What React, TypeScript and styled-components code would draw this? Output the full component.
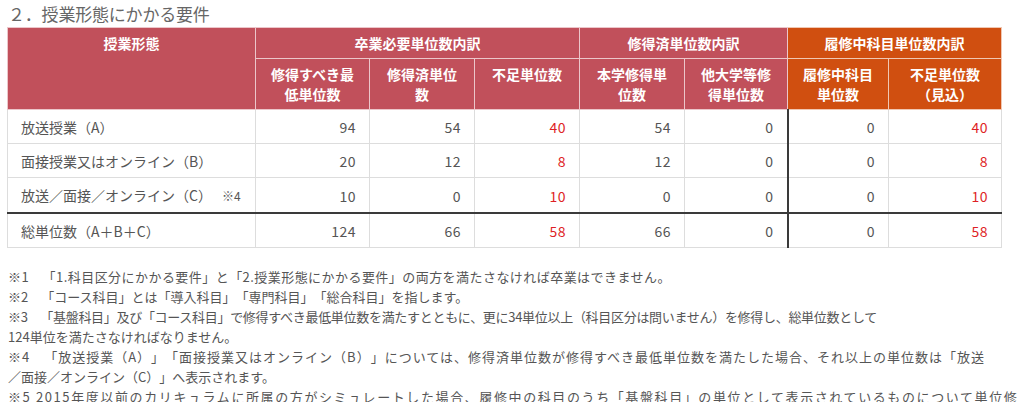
import React from 'react';
import styled, { createGlobalStyle, css } from 'styled-components';

const GlobalStyle = createGlobalStyle`
  html, body { margin: 0; padding: 0; background: #ffffff; overflow: hidden; }
  body {
    font-family: "Noto Sans CJK JP", "Noto Sans", sans-serif;
    color: #555555;
    text-spacing-trim: space-all;
  }
`;

const Page = styled.div`
  width: 1024px;
  box-sizing: border-box;
  padding: 0 0 0 7px;
  overflow: hidden;
`;

const Heading = styled.h2`
  margin: 0 0 1px 1px;
  padding-top: 2px;
  font-size: 17px;
  line-height: 24px;
  font-weight: normal;
  color: #666666;
  letter-spacing: -0.2px;
`;

const Table = styled.table`
  width: 994px;
  table-layout: fixed;
  border-collapse: collapse;
  font-size: 14px;
  line-height: 20px;
`;

type Tone = 'red' | 'orange';

const HeadCell = styled.th<{ $tone?: Tone }>`
  background: ${(p) => (p.$tone === 'orange' ? '#d04f10' : '#c1505b')};
  color: #ffffff;
  font-weight: bold;
  text-align: center;
  vertical-align: top;
  padding: 5px 8px;
  border: 1px solid ${(p) => (p.$tone === 'orange' ? '#f0c7b2' : '#ecc6ca')};
`;

const Row = styled.tr<{ $total?: boolean }>`
  ${(p) =>
    p.$total &&
    css`
      td {
        border-top: 2px solid #3a3a3a;
      }
    `}
`;

const LabelCell = styled.td`
  text-align: left;
  padding: 7px 12px 6px 13px;
  border: 1px solid #dddddd;
  color: #555555;
  white-space: nowrap;
`;

const NumCell = styled.td<{ $alert?: boolean; $divider?: boolean }>`
  text-align: right;
  padding: 7px 13px 6px 12px;
  border: 1px solid #dddddd;
  color: ${(p) => (p.$alert ? '#de1f26' : '#555555')};
  letter-spacing: 0.5px;
  ${(p) =>
    p.$divider &&
    css`
      border-left: 2px solid #3a3a3a;
    `}
`;

const Mark = styled.span`
  font-size: 12px;
  margin-left: 10px;
`;

const Notes = styled.div`
  margin-top: 19px;
  padding-left: 1px;
  font-size: 13px;
  line-height: 20px;
  color: #555555;
  white-space: nowrap;
`;

const Note = styled.p`
  margin: 0;
`;

const Line = styled.span<{ $tracking?: number }>`
  letter-spacing: ${(p) => p.$tracking ?? 0}px;
`;

const widths = [248, 114, 105, 105, 105, 103, 101, 113];

type RowData = {
  label: React.ReactNode;
  values: number[];
  total?: boolean;
};

const rows: RowData[] = [
  { label: '放送授業（A）', values: [94, 54, 40, 54, 0, 0, 40] },
  { label: '面接授業又はオンライン（B）', values: [20, 12, 8, 12, 0, 0, 8] },
  {
    label: (
      <>
        放送／面接／オンライン（C）<Mark>※4</Mark>
      </>
    ),
    values: [10, 0, 10, 0, 0, 0, 10],
  },
  { label: '総単位数（A＋B＋C）', values: [124, 66, 58, 66, 0, 0, 58], total: true },
];

const alertCols = new Set([2, 6]);

export default function App() {
  return (
    <>
      <GlobalStyle />
      <Page>
        <Heading>２．授業形態にかかる要件</Heading>
        <Table>
          <colgroup>
            {widths.map((w, i) => (
              <col key={i} style={{ width: w }} />
            ))}
          </colgroup>
          <thead>
            <tr>
              <HeadCell rowSpan={2}>授業形態</HeadCell>
              <HeadCell colSpan={3}>卒業必要単位数内訳</HeadCell>
              <HeadCell colSpan={2}>修得済単位数内訳</HeadCell>
              <HeadCell colSpan={2} $tone="orange">
                履修中科目単位数内訳
              </HeadCell>
            </tr>
            <tr>
              <HeadCell>
                修得すべき最
                <br />
                低単位数
              </HeadCell>
              <HeadCell>
                修得済単位
                <br />
                数
              </HeadCell>
              <HeadCell>不足単位数</HeadCell>
              <HeadCell>
                本学修得単
                <br />
                位数
              </HeadCell>
              <HeadCell>
                他大学等修
                <br />
                得単位数
              </HeadCell>
              <HeadCell $tone="orange">
                履修中科目
                <br />
                単位数
              </HeadCell>
              <HeadCell $tone="orange">
                不足単位数
                <br />
                （見込）
              </HeadCell>
            </tr>
          </thead>
          <tbody>
            {rows.map((r, i) => (
              <Row key={i} $total={r.total}>
                <LabelCell>{r.label}</LabelCell>
                {r.values.map((v, j) => (
                  <NumCell key={j} $alert={alertCols.has(j)} $divider={j === 5}>
                    {v}
                  </NumCell>
                ))}
              </Row>
            ))}
          </tbody>
        </Table>
        <Notes>
          <Note>
            <Line $tracking={0.45}>※1　「1.科目区分にかかる要件」と「2.授業形態にかかる要件」の両方を満たさなければ卒業はできません。</Line>
          </Note>
          <Note>※2　「コース科目」とは「導入科目」「専門科目」「総合科目」を指します。</Note>
          <Note>
            <Line $tracking={-0.3}>
              ※3　「基盤科目」及び「コース科目」で修得すべき最低単位数を満たすとともに、更に34単位以上（科目区分は問いません）を修得し、総単位数として
            </Line>
            <br />
            124単位を満たさなければなりません。
          </Note>
          <Note>
            <Line $tracking={1}>
              ※4　「放送授業（A）」「面接授業又はオンライン（B）」については、修得済単位数が修得すべき最低単位数を満たした場合、それ以上の単位数は「放送
            </Line>
            <br />
            ／面接／オンライン（C）」へ表示されます。
          </Note>
          <Note>
            <Line $tracking={1.6}>
              ※5 2015年度以前のカリキュラムに所属の方がシミュレートした場合、履修中の科目のうち「基盤科目」の単位として表示されているものについて単位修
            </Line>
          </Note>
        </Notes>
      </Page>
    </>
  );
}
